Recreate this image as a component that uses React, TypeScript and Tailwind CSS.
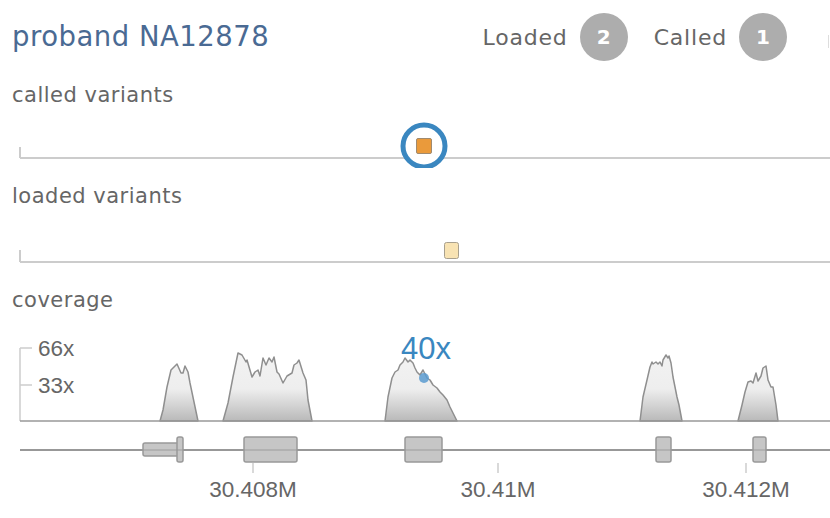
import React from "react";

const peaks: string[] = [
  "160,421 163,410 167,387 171,370 177,364 181,373 183,373 185,366 188,372 190,383 194,402 198,421",
  "223,421 228,403 233,377 238,353 242,355 246,362 247,360 252,377 255,372 258,370 260,376 263,358 266,365 269,358 272,362 274,357 277,372 279,374 283,383 287,376 292,373 294,365 297,363 299,360 303,373 306,380 308,400 312,421",
  "385,421 388,397 392,378 395,372 398,370 400,365 403,362 405,358 408,362 410,360 413,363 415,368 417,372 420,375 423,370 427,378 430,380 433,385 437,388 440,392 443,395 447,400 450,407 453,413 457,421",
  "640,421 643,397 647,380 650,367 652,362 653,364 656,362 658,364 660,362 662,366 663,360 666,355 668,358 669,356 671,363 673,377 677,397 679,405 682,421",
  "738,421 742,405 745,392 748,382 751,381 753,383 756,373 758,381 761,376 763,368 766,366 768,380 771,387 773,387 776,405 778,421",
];

const ticks = [
  { x: 253, label: "30.408M" },
  { x: 498, label: "30.41M" },
  { x: 746, label: "30.412M" },
];

const exons = [
  { x: 244, w: 53 },
  { x: 405, w: 37 },
  { x: 656, w: 15 },
  { x: 753, w: 13 },
];

const Badge = ({ n }: { n: number }) => (
  <span className="flex h-[48px] w-[48px] items-center justify-center rounded-full bg-[#adadad] text-[20px] font-semibold tracking-normal text-white">
    {n}
  </span>
);

const Label = ({ children }: { children: React.ReactNode }) => (
  <div className="h-[28px] px-3 text-[21px] leading-[28px] tracking-[0.5px] text-[#666]">{children}</div>
);

export default function App() {
  return (
    <div
      className="relative h-[518px] w-[830px] overflow-hidden bg-white"
      style={{ fontFamily: '"DejaVu Sans", "Liberation Sans", sans-serif' }}
    >
      <div className="flex h-[74px] items-center justify-between pl-3">
        <div className="text-[27.5px] tracking-[0.5px] text-[#4a6a93]">proband NA12878</div>
        <div className="flex items-center gap-[26px] pr-[43px] text-[22px] tracking-[0.8px] text-[#666]">
          <div className="flex items-center gap-3">
            Loaded <Badge n={2} />
          </div>
          <div className="flex items-center gap-3">
            Called <Badge n={1} />
          </div>
        </div>
      </div>
      <div className="absolute right-[1px] top-[35px] h-[13px] w-[1px] bg-[#ddd]" />

      <div className="mt-[7px]">
        <Label>called variants</Label>
      </div>
      <svg className="block h-[59px] w-full" viewBox="0 109 830 59">
        <line x1="20" y1="147" x2="20" y2="158" stroke="#ccc" strokeWidth="2" />
        <line x1="20" y1="158" x2="830" y2="158" stroke="#ccc" strokeWidth="2" />
        <circle cx="424" cy="146" r="21" fill="white" stroke="#3a87c0" strokeWidth="5" />
        <rect x="416.5" y="138.5" width="15" height="15" rx="1.5" fill="#ea9a3b" stroke="#a08a6e" />
      </svg>

      <div className="mt-[14px]">
        <Label>loaded variants</Label>
      </div>
      <svg className="block h-[58px] w-full" viewBox="0 210 830 58">
        <line x1="20" y1="250" x2="20" y2="262" stroke="#ccc" strokeWidth="2" />
        <line x1="20" y1="262" x2="830" y2="262" stroke="#ccc" strokeWidth="2" />
        <rect x="444.5" y="242.5" width="14" height="16" rx="2" fill="#f8e3b3" stroke="#a8a08e" />
      </svg>

      <div className="mt-[18px]">
        <Label>coverage</Label>
      </div>
      <svg className="block h-[204px] w-full" viewBox="0 314 830 204">
        <defs>
          <linearGradient id="cov" gradientUnits="userSpaceOnUse" x1="0" y1="350" x2="0" y2="421">
            <stop offset="0" stopColor="#f3f3f3" />
            <stop offset="0.55" stopColor="#eeeeee" />
            <stop offset="1" stopColor="#b9b9b9" />
          </linearGradient>
        </defs>
        <line x1="20" y1="348" x2="20" y2="421" stroke="#ccc" strokeWidth="1.5" />
        <line x1="20" y1="348" x2="32" y2="348" stroke="#ccc" strokeWidth="1.5" />
        <line x1="20" y1="385" x2="32" y2="385" stroke="#ccc" strokeWidth="1.5" />
        <text x="38" y="356" fontSize="22.5" fill="#666" fontFamily="Liberation Sans, sans-serif">66x</text>
        <text x="38" y="393" fontSize="22.5" fill="#666" fontFamily="Liberation Sans, sans-serif">33x</text>
        {peaks.map((p, i) => (
          <polygon key={i} points={p} fill="url(#cov)" stroke="#8f8f8f" strokeWidth="1.5" strokeLinejoin="round" />
        ))}
        <line x1="20" y1="421" x2="830" y2="421" stroke="#999" strokeWidth="1.5" />
        <circle cx="424" cy="378" r="5" fill="#5b9bd0" opacity="0.85" />
        <text x="426" y="359" fontSize="31" fill="#3a87c0" textAnchor="middle" fontFamily="Liberation Sans, sans-serif">40x</text>

        <line x1="20" y1="450" x2="830" y2="450" stroke="#999" strokeWidth="2" />
        <rect x="143" y="443" width="36" height="13" rx="2" fill="#c6c6c6" stroke="#999" strokeWidth="1.5" />
        <rect x="177" y="437" width="6" height="25" rx="2" fill="#c6c6c6" stroke="#999" strokeWidth="1.5" />
        {exons.map((e) => (
          <rect key={e.x} x={e.x} y="437" width={e.w} height="25" rx="2" fill="#c6c6c6" stroke="#999" strokeWidth="1.5" />
        ))}
        <line x1="20" y1="450" x2="830" y2="450" stroke="#999" strokeWidth="1.5" opacity="0.6" />
        {ticks.map((t) => (
          <g key={t.x}>
            <line x1={t.x} y1="463" x2={t.x} y2="473" stroke="#ccc" strokeWidth="1.5" />
            <text x={t.x} y="497" fontSize="22.5" fill="#666" textAnchor="middle" fontFamily="Liberation Sans, sans-serif">
              {t.label}
            </text>
          </g>
        ))}
      </svg>
    </div>
  );
}
